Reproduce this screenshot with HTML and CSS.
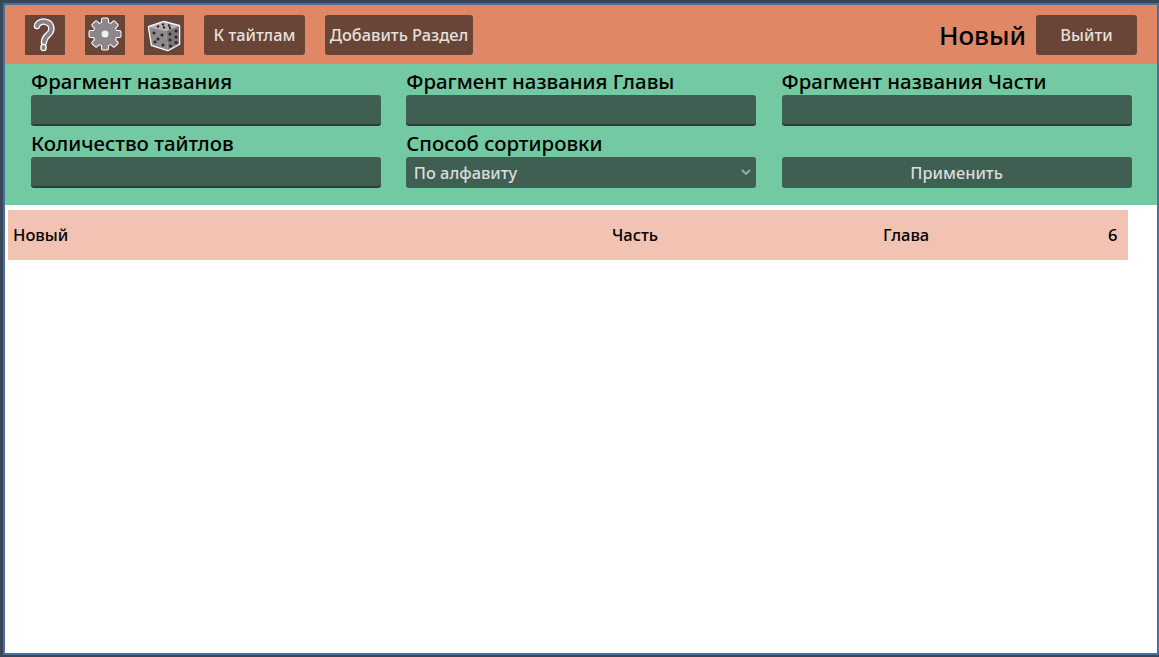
FILE: index.html
```html
<!DOCTYPE html>
<html lang="ru">
<head>
<meta charset="utf-8">
<title>Новый</title>
<link rel="stylesheet" href="styles.css">
</head>
<body>
<div class="frame">
  <header class="topbar">
    <div class="tools">
      <button class="icon-btn" aria-label="Помощь">
        <svg viewBox="0 0 40 40" width="40" height="40">
          <path class="halo" d="M12 11 C13 7 18 6 21 7 C26 8 27.500 13 25.500 17 C23.500 20.500 19.500 21 19 27 M18.500 32 L18.500 33" />
          <path class="fill" d="M12 11 C13 7 18 6 21 7 C26 8 27.500 13 25.500 17 C23.500 20.500 19.500 21 19 27 M18.500 32 L18.500 33" />
        </svg>
      </button>
      <button class="icon-btn" aria-label="Настройки">
        <svg viewBox="0 0 40 40" width="40" height="40">
          <defs>
            <g id="gear-shape">
              <circle cx="20" cy="19" r="11.500" />
              <rect x="17" y="3.500" width="6" height="31" rx="1" />
              <rect x="17" y="3.500" width="6" height="31" rx="1" transform="rotate(45 20 19)" />
              <rect x="17" y="3.500" width="6" height="31" rx="1" transform="rotate(90 20 19)" />
              <rect x="17" y="3.500" width="6" height="31" rx="1" transform="rotate(135 20 19)" />
            </g>
          </defs>
          <use href="#gear-shape" class="gear-halo" />
          <use href="#gear-shape" class="gear-fill" />
          <circle class="hole" cx="20" cy="19" r="3.500" />
        </svg>
      </button>
      <button class="icon-btn" aria-label="Случайный">
        <svg viewBox="0 0 40 40" width="40" height="40">
          <path class="die-edge" d="M5 12 L20 7 L35 11 L35 29 L24 35 L8 30 Z" />
          <path class="die-top" d="M5 12 L20 7 L35 11 L22 16 Z" />
          <path class="die-left" d="M5 12 L22 16 L24 35 L8 30 Z" />
          <path class="die-right" d="M22 16 L35 11 L35 29 L24 35 Z" />
          <g class="pips">
            <circle cx="19" cy="9.500" r="1.200" /><circle cx="25" cy="10.500" r="1.200" /><circle cx="14" cy="11.500" r="1.200" /><circle cx="20" cy="12.500" r="1.200" /><circle cx="26" cy="13" r="1.200" />
            <circle cx="10" cy="18" r="1.500" /><circle cx="18" cy="20" r="1.500" /><circle cx="14" cy="24" r="1.500" /><circle cx="11" cy="27" r="1.500" /><circle cx="19" cy="30" r="1.500" />
            <circle cx="26" cy="19" r="1.500" /><circle cx="32" cy="16" r="1.500" /><circle cx="26" cy="25" r="1.500" /><circle cx="32" cy="22" r="1.500" /><circle cx="26.500" cy="31" r="1.500" /><circle cx="32" cy="27.500" r="1.500" />
          </g>
        </svg>
      </button>
      <button class="btn btn-titles">К тайтлам</button>
      <button class="btn btn-add">Добавить Раздел</button>
    </div>
    <div class="account">
      <span class="user">Новый</span>
      <button class="btn btn-exit">Выйти</button>
    </div>
  </header>
  <section class="filters">
    <label class="field"><span class="caption">Фрагмент названия</span><input class="input" type="text"></label>
    <label class="field"><span class="caption">Фрагмент названия Главы</span><input class="input" type="text"></label>
    <label class="field"><span class="caption">Фрагмент названия Части</span><input class="input" type="text"></label>
    <label class="field"><span class="caption">Количество тайтлов</span><input class="input" type="text"></label>
    <label class="field"><span class="caption">Способ сортировки</span>
      <span class="select">По алфавиту
        <svg class="chevron" viewBox="0 0 10 6" width="10" height="6"><path d="M1 1 L5 5 L9 1" /></svg>
      </span>
    </label>
    <div class="field field-end"><button class="apply">Применить</button></div>
  </section>
  <main class="list">
    <div class="row">
      <span class="cell-name">Новый</span>
      <span class="cell-part">Часть</span>
      <span class="cell-chapter">Глава</span>
      <span class="cell-count">6</span>
    </div>
  </main>
</div>
</body>
</html>
```
FILE: styles.css
```css
* { box-sizing: border-box; }
html, body { margin: 0; height: 100%; }
body {
  background: #3a4659;
  padding: 3px 0 0 3px;
  font-family: "Noto Sans", sans-serif;
  overflow: hidden;
}
.frame {
  height: 652px;
  background: #fff;
  border: 2px solid #4a6f9c;
  display: flex;
  flex-direction: column;
}
.topbar {
  height: 59px;
  flex: none;
  background: #e08865;
  display: flex;
  align-items: center;
  justify-content: space-between;
  padding: 0 20px;
}
.tools { display: flex; align-items: center; }
.icon-btn {
  width: 40px; height: 40px;
  padding: 0; border: 0;
  background: #684536;
  border-radius: 1px;
  margin-right: 20px;
  display: block;
}
.icon-btn + .icon-btn + .icon-btn { margin-left: -1px; }
.icon-btn svg { display: block; }
.halo { fill: none; stroke: #fff; stroke-width: 6.500; stroke-linecap: round; stroke-linejoin: round; }
.fill { fill: none; stroke: #8a8288; stroke-width: 4; stroke-linecap: round; stroke-linejoin: round; }
.gear-halo { fill: #fff; stroke: #fff; stroke-width: 2; stroke-linejoin: round; }
.gear-fill { fill: #8d868b; }
.hole { fill: #f2f0f1; }
.die-edge { fill: #fff; stroke: #fff; stroke-width: 2.500; stroke-linejoin: round; }
.die-top { fill: #b5afb2; }
.die-left { fill: #8f888c; }
.die-right { fill: #7c7579; }
.pips circle { fill: #2a2426; }
.btn {
  height: 40px;
  border: 0;
  border-radius: 3px;
  background: #684536;
  color: #e6e0dc;
  font: 500 16.400px "Noto Sans", sans-serif;
  padding: 0;
}
.btn-titles { width: 101px; margin-right: 20px; }
.btn-add { width: 148px; }
.account { display: flex; align-items: center; }
.user { font-size: 26px; font-weight: 500; color: #000; margin-right: 10px; }
.btn-exit { width: 101px; }
.filters {
  height: 141px;
  flex: none;
  background: #72c9a2;
  display: grid;
  grid-template-columns: 350px 350px 350px;
  column-gap: 25.300px;
  grid-auto-rows: 62px;
  padding: 0 0 0 26px;
}
.field { display: flex; flex-direction: column; justify-content: flex-end; height: 62px; }
.caption { font-size: 20.400px; font-weight: 500; line-height: 23px; color: #000; height: 25px; }
.input {
  height: 31px;
  background: #3f5f52;
  border: 0;
  border-bottom: 2px solid #2b3f37;
  border-radius: 3px;
  width: 100%;
  display: block;
  padding: 0 8px;
}
.select {
  position: relative;
  height: 31px;
  background: #3f5f52;
  border-radius: 3px;
  color: #dcdcdc;
  font-size: 16.400px;
  font-weight: 500;
  line-height: 32px;
  padding-left: 7.500px;
}
.chevron { position: absolute; right: 5px; top: 12px; fill: none; stroke: #a3aca8; stroke-width: 1.800; }
.apply {
  height: 31px;
  width: 100%;
  background: #3f5f52;
  border: 0;
  border-radius: 3px;
  color: #dcdcdc;
  font: 500 16.400px "Noto Sans", sans-serif;
  padding: 0;
}
.list { flex: 1; padding: 5px 0 0 3px; }
.row {
  width: 1120px;
  height: 50px;
  background: #f2c2b2;
  display: flex;
  align-items: center;
  font-size: 16.500px;
  font-weight: 500;
  color: #000;
  padding: 0 0 1px 5px;
}
.cell-name { width: 599px; }
.cell-part { width: 271px; }
.cell-chapter { width: 225px; }
.cell-count { width: 10px; }
```
